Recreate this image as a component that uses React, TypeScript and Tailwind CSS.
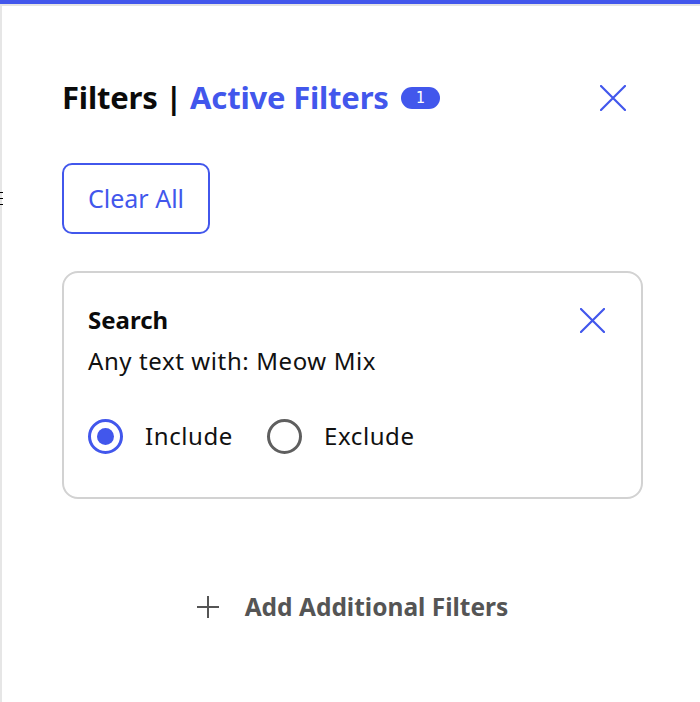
const FONT = "font-['Noto_Sans',_'Open_Sans',_sans-serif]";

function Cross({ size, className }: { size: number; className?: string }) {
  return (
    <svg width={size} height={size} viewBox="0 0 26 26" className={className} fill="none">
      <path d="M1 1L25 25M25 1L1 25" stroke="currentColor" strokeWidth={2.2 * (26 / size)} strokeLinecap="round" />
    </svg>
  );
}

function Radio({ label, checked }: { label: string; checked?: boolean }) {
  return (
    <label className="flex items-center gap-[22px]">
      <span
        className={
          checked
            ? 'flex h-[35px] w-[35px] items-center justify-center rounded-full border-[3px] border-[#4257ec]'
            : 'flex h-[35px] w-[35px] items-center justify-center rounded-full border-[3px] border-[#5f5f5f]'
        }
      >
        {checked && <span className="h-[17px] w-[17px] rounded-full bg-[#4257ec]" />}
      </span>
      <span className="text-[24px] tracking-[0.6px] text-[#111]">{label}</span>
    </label>
  );
}

export default function App() {
  return (
    <div className={`${FONT} h-[702px] w-[700px] overflow-hidden bg-white`}>
      {/* top accent */}
      <div className="h-[4px] bg-[#4257ec]" />
      <div className="h-[2px] bg-[#e4e4e4]" />

      <div className="relative flex h-[696px]">
        {/* sidebar edge with clipped menu handle */}
        <div className="w-[2px] bg-[#e6e6e6]" />
        <div className="absolute left-0 top-[186px] flex flex-col gap-[5px]">
          <span className="h-[1px] w-[3px] bg-black" />
          <span className="h-[1px] w-[3px] bg-black" />
          <span className="h-[1px] w-[3px] bg-black" />
        </div>

        <div className="flex flex-1 flex-col pl-[60px] pr-[57px] pt-[73px]">
          <div className="flex items-center">
            <h2 className="text-[31px] font-bold leading-[36px] tracking-[-0.2px] text-[#0b0b0b]">
              Filters | <span className="text-[#4257ec]">Active Filters</span>
            </h2>
            <span className="ml-[12px] mt-[2px] flex h-[22px] w-[39px] items-center justify-center rounded-full bg-[#4257ec] font-['DejaVu_Sans_Mono',_monospace] text-[15px] text-white">
              1
            </span>
            <button className="ml-auto mr-[17px] mt-[1px] text-[#4257ec]">
              <Cross size={26} />
            </button>
          </div>

          <button className="mt-[48px] h-[71px] w-[148px] rounded-[10px] border-2 border-[#4257ec] text-[25px] text-[#4257ec]">
            Clear All
          </button>

          <div className="mt-[37px] rounded-[16px] border-2 border-[#d2d2d2] px-[24px] pb-[43px] pt-[32px]">
            <div className="flex items-start justify-between">
              <div>
                <p className="text-[24px] font-bold leading-[30px] text-[#0b0b0b]">Search</p>
                <p className="mt-[11px] text-[24px] leading-[30px] tracking-[0.6px] text-[#111]">
                  Any text with: Meow Mix
                </p>
              </div>
              <button className="mr-[12px] mt-[3px] text-[#4257ec]">
                <Cross size={25} />
              </button>
            </div>
            <div className="mt-[42px] flex items-center gap-[34px]">
              <Radio label="Include" checked />
              <Radio label="Exclude" />
            </div>
          </div>

          <button className="mt-[91px] flex h-[34px] items-center justify-center gap-[26px] text-[#555]">
            <svg width="22" height="22" viewBox="0 0 22 22" fill="none">
              <path d="M11 0V22M0 11H22" stroke="currentColor" strokeWidth="2" />
            </svg>
            <span className="text-[24.5px] font-bold">Add Additional Filters</span>
          </button>
        </div>
      </div>
    </div>
  );
}
